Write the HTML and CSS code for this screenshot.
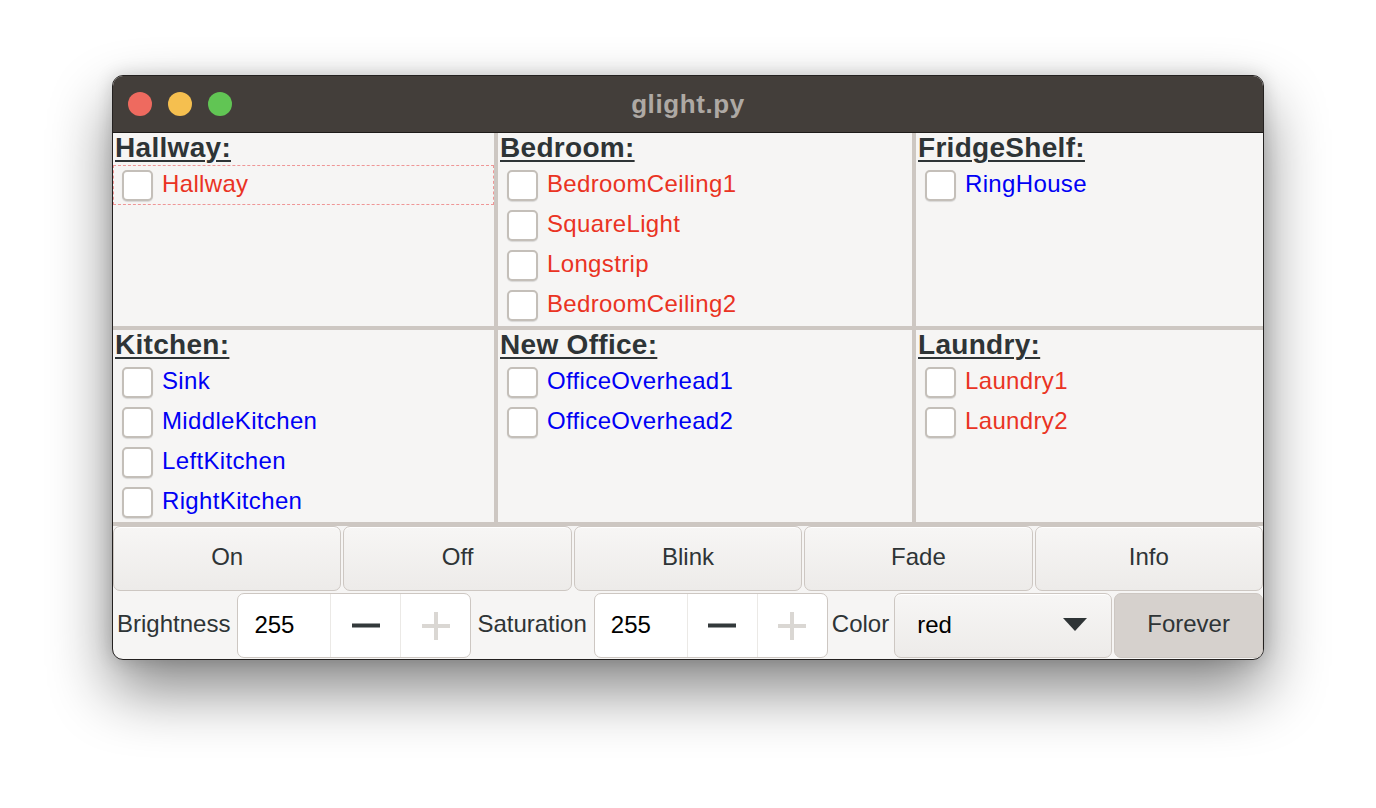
FILE: index.html
```html
<!DOCTYPE html>
<html>
<head>
<meta charset="utf-8">
<title>glight.py</title>
<link rel="stylesheet" href="styles.css">
</head>
<body>
<div class="desktop">
  <div class="window">
    <div class="titlebar">
      <div class="lights">
        <span class="light light-red"></span>
        <span class="light light-yellow"></span>
        <span class="light light-green"></span>
      </div>
      <div class="title">glight.py</div>
      <div></div>
    </div>

    <div class="groups">
      <section class="group">
        <h2 class="group-title">Hallway:</h2>
        <label class="item focus"><span class="check"></span><span class="name off">Hallway</span></label>
      </section>
      <section class="group">
        <h2 class="group-title">Bedroom:</h2>
        <label class="item"><span class="check"></span><span class="name off">BedroomCeiling1</span></label>
        <label class="item"><span class="check"></span><span class="name off">SquareLight</span></label>
        <label class="item"><span class="check"></span><span class="name off">Longstrip</span></label>
        <label class="item"><span class="check"></span><span class="name off">BedroomCeiling2</span></label>
      </section>
      <section class="group">
        <h2 class="group-title">FridgeShelf:</h2>
        <label class="item"><span class="check"></span><span class="name on">RingHouse</span></label>
      </section>
      <section class="group">
        <h2 class="group-title">Kitchen:</h2>
        <label class="item"><span class="check"></span><span class="name on">Sink</span></label>
        <label class="item"><span class="check"></span><span class="name on">MiddleKitchen</span></label>
        <label class="item"><span class="check"></span><span class="name on">LeftKitchen</span></label>
        <label class="item"><span class="check"></span><span class="name on">RightKitchen</span></label>
      </section>
      <section class="group">
        <h2 class="group-title">New Office:</h2>
        <label class="item"><span class="check"></span><span class="name on">OfficeOverhead1</span></label>
        <label class="item"><span class="check"></span><span class="name on">OfficeOverhead2</span></label>
      </section>
      <section class="group">
        <h2 class="group-title">Laundry:</h2>
        <label class="item"><span class="check"></span><span class="name off">Laundry1</span></label>
        <label class="item"><span class="check"></span><span class="name off">Laundry2</span></label>
      </section>
    </div>

    <div class="actions">
      <button class="btn">On</button>
      <button class="btn">Off</button>
      <button class="btn">Blink</button>
      <button class="btn">Fade</button>
      <button class="btn">Info</button>
    </div>

    <div class="controls">
      <span class="ctl-label first">Brightness</span>
      <div class="spin">
        <span class="spin-value">255</span>
        <span class="spin-btn">
          <svg width="30" height="30" viewBox="0 0 30 30"><rect x="1" y="12.5" width="28" height="4" fill="#33393b"/></svg>
        </span>
        <span class="spin-btn">
          <svg width="30" height="30" viewBox="0 0 30 30"><rect x="1" y="13" width="28" height="4" fill="#dad7d3"/><rect x="13" y="1" width="4" height="28" fill="#dad7d3"/></svg>
        </span>
      </div>
      <span class="ctl-label">Saturation</span>
      <div class="spin">
        <span class="spin-value">255</span>
        <span class="spin-btn">
          <svg width="30" height="30" viewBox="0 0 30 30"><rect x="1" y="12.5" width="28" height="4" fill="#33393b"/></svg>
        </span>
        <span class="spin-btn">
          <svg width="30" height="30" viewBox="0 0 30 30"><rect x="1" y="13" width="28" height="4" fill="#dad7d3"/><rect x="13" y="1" width="4" height="28" fill="#dad7d3"/></svg>
        </span>
      </div>
      <span class="ctl-label color-label">Color</span>
      <div class="combo">
        <span>red</span>
        <svg width="24" height="13" viewBox="0 0 24 13"><polygon points="0,0 24,0 12,13" fill="#2e3436"/></svg>
      </div>
      <button class="toggle">Forever</button>
    </div>
  </div>
</div>
</body>
</html>
```

FILE: styles.css
```css
* {
  box-sizing: border-box;
}

body {
  margin: 0;
  background: #ffffff;
  font-family: "Liberation Sans", Arial, sans-serif;
}

button {
  font: inherit;
}

.desktop {
  width: 1376px;
  height: 808px;
  padding: 75px 0 0 112px;
}

.window {
  width: 1152px;
  height: 585px;
  border: 1px solid #242120;
  border-radius: 11px;
  overflow: hidden;
  background: #f6f5f4;
  display: flex;
  flex-direction: column;
  box-shadow: 0 30px 62px rgba(0, 0, 0, 0.48), 0 0 18px rgba(0, 0, 0, 0.16);
}

.titlebar {
  flex: none;
  height: 57px;
  background: #433e3a;
  border-bottom: 1px solid #1e1b19;
  display: grid;
  grid-template-columns: 1fr auto 1fr;
  align-items: center;
}

.lights {
  display: flex;
  gap: 16px;
  padding-left: 15px;
}

.light {
  width: 24px;
  height: 24px;
  border-radius: 50%;
}

.light-red { background: #ee6a5f; }
.light-yellow { background: #f5bf4f; }
.light-green { background: #61c554; }

.title {
  color: #aea9a4;
  font-weight: bold;
  font-size: 26px;
  letter-spacing: 0.6px;
  line-height: 30px;
}

.groups {
  flex: none;
  display: grid;
  grid-template-columns: 381px 414px 347px;
  grid-template-rows: 193px 192px;
  gap: 4px;
  background: #cdc7c2;
  border-bottom: 4px solid #cdc7c2;
}

.group {
  background: #f6f5f4;
  margin: 0;
}

.group-title {
  margin: 0;
  height: 32px;
  padding-left: 2px;
  font-size: 28px;
  line-height: 30px;
  font-weight: bold;
  color: #2e3436;
  text-decoration: underline;
  text-decoration-thickness: 2px;
  text-underline-offset: 3px;
  letter-spacing: 0.3px;
}

.item {
  display: flex;
  align-items: center;
  height: 40px;
  border: 1px dashed transparent;
  padding-left: 8px;
}

.item.focus {
  border-color: #ef9696;
}

.check {
  flex: none;
  width: 31px;
  height: 31px;
  margin-right: 9px;
  background: #ffffff;
  border: 2px solid #c4bfb9;
  border-radius: 5px;
  box-shadow: 0 1px 1px rgba(0, 0, 0, 0.12);
}

.name {
  font-size: 24px;
  letter-spacing: 0.35px;
  padding-bottom: 2px;
}

.name.off { color: #ea3323; }
.name.on { color: #0000f5; }

.actions {
  flex: none;
  height: 66px;
  display: flex;
  gap: 2px;
  padding: 0 0 1px;
}

.btn {
  flex: 1;
  margin: 0;
  padding: 0 0 3px;
  border: 1px solid #cdc7c2;
  border-radius: 7px;
  background: linear-gradient(#f7f6f5, #edebe9);
  box-shadow: inset 0 1px 0 #ffffff;
  color: #2e3436;
  font-size: 24px;
}

.controls {
  flex: none;
  height: 67px;
  display: flex;
  align-items: stretch;
  padding: 1px 0 1px;
}

.ctl-label {
  display: flex;
  align-items: center;
  font-size: 24px;
  color: #2e3436;
  padding: 0 7px 3px 6px;
}

.ctl-label.first {
  padding-left: 4px;
}

.ctl-label.color-label {
  padding: 0 5px 3px 4px;
}

.spin {
  flex: none;
  width: 234px;
  display: flex;
  background: #ffffff;
  border: 1px solid #cdc7c2;
  border-radius: 7px;
  overflow: hidden;
}

.spin-value {
  width: 92px;
  display: flex;
  align-items: center;
  padding: 0 0 2px 16px;
  font-size: 24px;
  color: #000000;
}

.spin-btn {
  width: 70px;
  display: flex;
  align-items: center;
  justify-content: center;
  border-left: 1px solid #ebe9e6;
}

.combo {
  flex: none;
  width: 218px;
  display: flex;
  align-items: center;
  justify-content: space-between;
  padding: 0 24px 2px 22px;
  border: 1px solid #cdc7c2;
  border-radius: 7px;
  background: linear-gradient(#f7f6f5, #edebe9);
  box-shadow: inset 0 1px 0 #ffffff;
  font-size: 24px;
  color: #000000;
}

.toggle {
  flex: 1;
  margin: 0 0 0 2px;
  padding: 0 0 3px;
  border: 1px solid #cdc7c2;
  border-radius: 7px;
  background: #d6d1cd;
  color: #2e3436;
  font-size: 24px;
}
```
